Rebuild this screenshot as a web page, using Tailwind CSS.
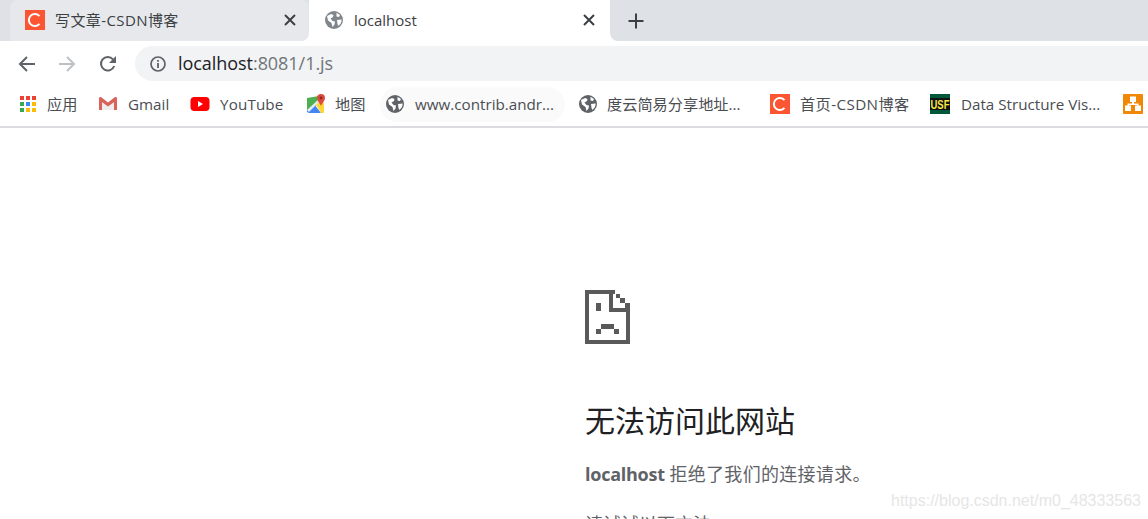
<!DOCTYPE html>
<html lang="zh-CN">
<head>
    <meta charset="UTF-8">
    <title>localhost</title>
    <script src="https://cdn.jsdelivr.net/npm/@tailwindcss/browser@4"></script>
</head>
<body class="bg-white overflow-hidden h-[519px] font-['Open_Sans','Noto_Sans_CJK_SC',sans-serif] relative">
    <svg class="hidden">
        <symbol id="globe" viewBox="0 0 18 18">
            <circle cx="9" cy="9" r="9" fill="currentColor"/>
            <path d="M2 5 L6 3 L8.5 4 L8 6 L5.5 7.5 L7.5 10 L10 10.5 L9.5 13.5 L7.5 16 L6.5 12 L3 9.5 Z M11.5 1.8 L15 4 L14 6 L11.5 5.5 Z M12 9 L16.8 8.5 L16 12 L13.5 15 L12.5 13 Z" fill="#fff"/>
        </symbol>
        <symbol id="csdn" viewBox="0 0 20 20">
            <rect width="20" height="20" fill="#fc5531"/>
            <path d="M14.5 6.2 A6 6 0 1 0 14.5 13.8" fill="none" stroke="#fff" stroke-width="2"/>
        </symbol>
    </svg>

    <!-- tab strip -->
    <div class="flex h-[41px] bg-white">
        <div class="w-[309px] bg-[#dee1e6] rounded-br-lg pl-[10px]">
            <div class="h-[41px] w-[299px] bg-[#e6e8ec] rounded-t-lg rounded-br-lg flex items-center pl-[15px] pr-[10px] pb-[1px]">
                <svg class="w-5 h-5 shrink-0"><use href="#csdn"/></svg>
                <span class="ml-[10px] text-[15px] tracking-[0.4px] text-[#3c4043] flex-1">写文章-CSDN博客</span>
                <svg class="w-[14px] h-[14px] mr-[2px]" viewBox="0 0 14 14"><path d="M2 2 L12 12 M12 2 L2 12" stroke="#3c4043" stroke-width="2"/></svg>
            </div>
        </div>
        <div class="w-[301px] bg-white rounded-t-lg flex items-center pl-[16px] pr-[14px] pb-[1px]">
            <svg class="w-[18px] h-[18px] text-[#80868b] shrink-0"><use href="#globe"/></svg>
            <span class="ml-[11px] text-[15px] text-[#3c4043] flex-1">localhost</span>
            <svg class="w-[14px] h-[14px]" viewBox="0 0 14 14"><path d="M2 2 L12 12 M12 2 L2 12" stroke="#3c4043" stroke-width="2"/></svg>
        </div>
        <div class="flex-1 bg-[#dee1e6] rounded-bl-lg flex items-center pl-[18px]">
            <svg class="w-4 h-4" viewBox="0 0 16 16"><path d="M8 0.5 V15.5 M0.5 8 H15.5" stroke="#3c4043" stroke-width="2"/></svg>
        </div>
    </div>

    <!-- toolbar -->
    <div class="h-[46px] bg-white flex items-center pl-[18px] pb-[1px]">
        <svg class="w-[18px] h-[18px]" viewBox="0 0 18 18"><path d="M17 9 H2 M9 2 L2 9 L9 16" fill="none" stroke="#5f6368" stroke-width="2"/></svg>
        <svg class="w-[18px] h-[18px] ml-[22px]" viewBox="0 0 18 18"><path d="M1 9 H16 M9 2 L16 9 L9 16" fill="none" stroke="#bdc1c6" stroke-width="2"/></svg>
        <svg class="w-[18px] h-[18px] ml-[23px]" viewBox="0 0 18 18"><path d="M15.2 11 A6.8 6.8 0 1 1 14 4.3" fill="none" stroke="#5f6368" stroke-width="2"/><path d="M17 1 V8 H10 Z" fill="#5f6368"/></svg>
        <div class="ml-[18px] flex-1 h-[35px] bg-[#f1f3f4] rounded-l-full flex items-center pl-[15px]">
            <svg class="w-4 h-4 shrink-0" viewBox="0 0 16 16"><circle cx="8" cy="8" r="7" fill="none" stroke="#5f6368" stroke-width="1.7"/><path d="M8 7 V12 M8 4 V5.8" stroke="#5f6368" stroke-width="1.8"/></svg>
            <span class="ml-[12px] text-[18px] tracking-[-0.05px] text-[#70757a]"><span class="text-[#202124]">localhost</span>:8081/1.js</span>
        </div>
    </div>

    <!-- bookmarks bar -->
    <div class="h-[41px] bg-white border-b-2 border-[#dadce0] flex items-center pb-[5px] text-[15.2px] text-[#4a4d52] whitespace-nowrap">
        <div class="ml-[20px] w-[16px] h-[16px] grid grid-cols-3 gap-[2px] shrink-0">
            <i class="bg-[#ea4335]"></i><i class="bg-[#ea4335]"></i><i class="bg-[#ea4335]"></i>
            <i class="bg-[#34a853]"></i><i class="bg-[#4285f4]"></i><i class="bg-[#fbbc05]"></i>
            <i class="bg-[#34a853]"></i><i class="bg-[#fbbc05]"></i><i class="bg-[#fbbc05]"></i>
        </div>
        <span class="ml-[11px] w-[51px]">应用</span>

        <svg class="w-5 h-5 shrink-0" viewBox="0 0 20 20"><path d="M1 16 V4 L10 11 L19 4 V16 H16 V8 L10 13 L4 8 V16 Z" fill="#e5e5e5"/><path d="M4 8 L10 13 L16 8 V16 H4 Z" fill="#eeeeee"/><path d="M1 16 V4 L4 4 V16 Z M16 4 H19 V16 H16 Z M1 3.5 L3 3 L10 8.5 L17 3 L19 3.5 V6 L10 12.5 L1 6 Z" fill="#d9635a"/></svg>
        <span class="ml-[10px] w-[62px]">Gmail</span>

        <svg class="w-5 h-5 shrink-0" viewBox="0 0 20 20"><rect x="0.5" y="3" width="19" height="14" rx="4" fill="#ff0000"/><path d="M8 7 L13 10 L8 13 Z" fill="#fff"/></svg>
        <span class="ml-[10px] w-[86px] tracking-[0.15px]">YouTube</span>

        <svg class="w-5 h-5 shrink-0" viewBox="0 0 20 20"><path d="M1 4 L13 2 V10 L1 16 Z" fill="#4caf50"/><path d="M1 16 L8 10 L15 19 H3 L1 18 Z" fill="#4285f4"/><path d="M9 9 L13 6 L18 9 V19 H15 Z" fill="#fdd835"/><path d="M1 16 L13 5 L14 7 L3 18 Z" fill="#e8eaed"/><path d="M15 0 A4 4 0 0 1 19 4 C19 7 16 9 15 12 C14 9 11 7 11 4 A4 4 0 0 1 15 0 Z" fill="#dd4b3e"/><circle cx="15" cy="4" r="1.4" fill="#8a2b22"/></svg>
        <span class="ml-[9px] w-[45px]">地图</span>

        <div class="h-[35px] w-[185px] pl-[6px] rounded-full bg-[#fafafb] flex items-center shrink-0">
            <svg class="w-[18px] h-[18px] text-[#5f6368] shrink-0"><use href="#globe"/></svg>
            <span class="ml-[11px]">www.contrib.andr...</span>
        </div>

        <svg class="ml-[14px] w-[18px] h-[18px] text-[#5f6368] shrink-0"><use href="#globe"/></svg>
        <span class="ml-[10px] w-[163px]">度云简易分享地址...</span>

        <svg class="w-5 h-5 shrink-0"><use href="#csdn"/></svg>
        <span class="ml-[10px] w-[130px] tracking-[0.4px]">首页-CSDN博客</span>

        <svg class="w-5 h-5 shrink-0" viewBox="0 0 20 20"><rect width="20" height="20" fill="#00573c"/><rect y="4" width="20" height="12" fill="#111"/><text x="10" y="15" text-anchor="middle" textLength="19" lengthAdjust="spacingAndGlyphs" font-family="Liberation Sans" font-weight="700" font-size="13" fill="#f7e948">USF</text></svg>
        <span class="ml-[11px] w-[162px]">Data Structure Vis...</span>

        <svg class="w-5 h-5 shrink-0" viewBox="0 0 20 20"><rect width="20" height="20" rx="1" fill="#f08705"/><path d="M7 2.5 H13 V8 H11 V9.5 H15.5 V11.5 H18 V17 H12 V11.5 H14 V11 H6 V11.5 H8 V17 H2 V11.5 H4.5 V9.5 H9 V8 H7 Z" fill="#fff"/></svg>
    </div>

    <!-- error page -->
    <div class="pl-[585px] pt-[162px]">
        <svg class="w-[45px] h-[54px] block" viewBox="0 0 45 54">
            <path d="M0 0 H30 V4 H28 V18 H45 V54 H0 Z M4 4 V50 H41 V22 H24 V4 Z" fill="#5a5a5a" fill-rule="evenodd"/>
            <path d="M31 4 H35 V8 H31 Z M35 8 H40 V13 H35 Z M40 13 H45 V18 H40 Z M11 13 H16 V21 H11 Z M11 39 H16 V44 H11 Z M16 34 H29 V39 H16 Z M29 39 H34 V44 H29 Z" fill="#5a5a5a"/>
        </svg>
        <h1 class="mt-[57px] text-[30px] leading-[40px] text-[#202124]">无法访问此网站</h1>
        <p class="mt-[19px] text-[18px] leading-[28px] text-[#5f6368]"><b class="font-bold tracking-[-0.25px]">localhost</b> <span class="tracking-[0.3px]">拒绝了我们的连接请求。</span></p>
        <p class="mt-[22px] text-[18px] leading-[28px] text-[#5f6368]">请试试以下方法：</p>
    </div>

    <div class="absolute left-[891px] top-[491px] text-[16px] leading-[20px] font-['Liberation_Sans',sans-serif] text-[#e6e6e6]">https://blog.csdn.net/m0_48333563</div>
</body>
</html>
